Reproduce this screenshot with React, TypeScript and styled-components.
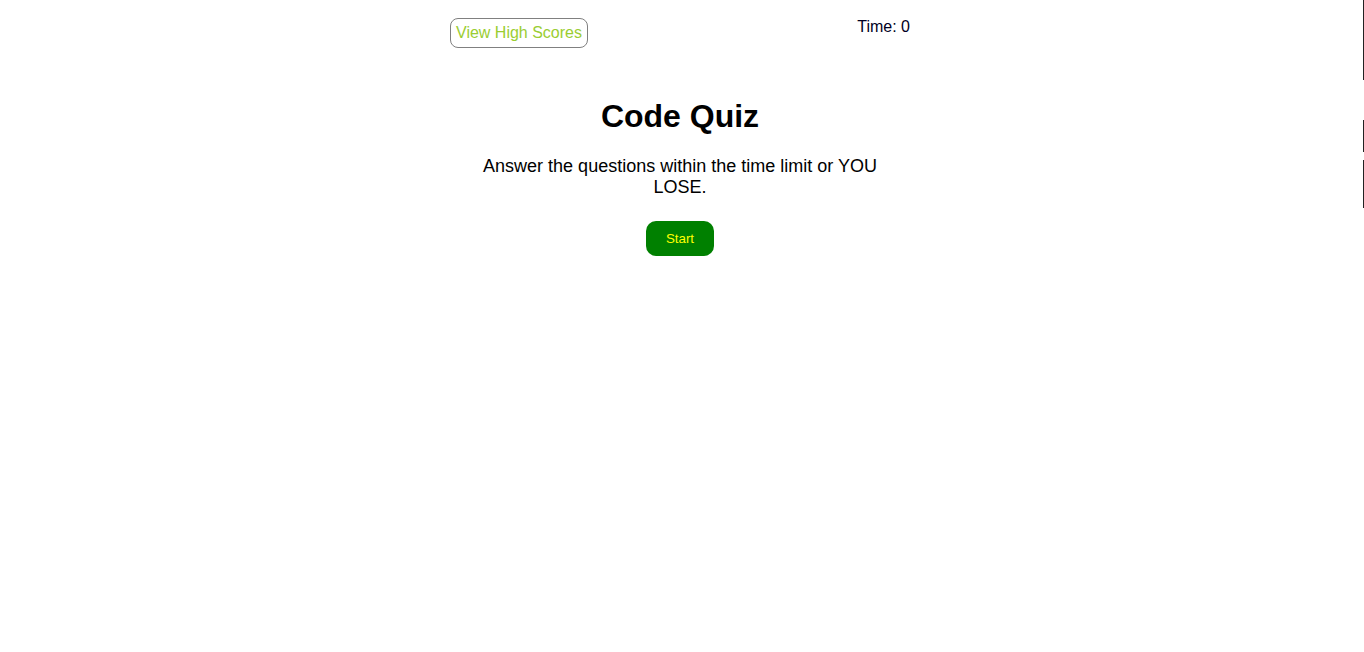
import React from "react";
import styled, { createGlobalStyle } from "styled-components";

const GlobalStyle = createGlobalStyle`
  html, body {
    margin: 0;
    padding: 0;
    background: #ffffff;
    font-family: "Liberation Sans", Arial, sans-serif;
  }
`;

const Page = styled.div`
  width: 1360px;
  min-height: 652px;
  box-sizing: border-box;
`;

const Container = styled.div`
  width: 460px;
  margin: 0 auto;
  display: flex;
  flex-direction: column;
  align-items: center;
`;

const Header = styled.header`
  width: 100%;
  display: flex;
  justify-content: space-between;
  align-items: flex-start;
  padding-top: 15px;
`;

const ScoresButton = styled.button`
  margin-top: 3px;
  font-family: "Liberation Sans", Arial, sans-serif;
  font-size: 16px;
  line-height: 18px;
  color: #9acd32;
  background: #ffffff;
  border: 1px solid #808080;
  border-radius: 8px;
  padding: 5px 5px;
  cursor: pointer;
`;

const Timer = styled.div`
  margin-top: 3px;
  font-size: 16px;
  line-height: 18px;
  color: #000022;
`;

const Title = styled.h1`
  margin: 50px 0 0;
  font-size: 32px;
  line-height: 37px;
  font-weight: 700;
  color: #000000;
`;

const Intro = styled.p`
  width: 400px;
  margin: 21px 0 0;
  font-size: 18px;
  line-height: 21px;
  text-align: center;
  color: #000000;
`;

const StartButton = styled.button`
  margin-top: 23px;
  font-family: "Liberation Sans", Arial, sans-serif;
  font-size: 13.33px;
  line-height: 15px;
  color: #ffff00;
  background: #008000;
  border: none;
  border-radius: 10px;
  padding: 10px 20px;
  cursor: pointer;
`;

const EdgeLine = styled.div`
  position: fixed;
  top: 0;
  right: 0;
  width: 1px;
  height: 100%;
  background: linear-gradient(
    to bottom,
    #222 0px,
    #222 80px,
    transparent 80px,
    transparent 120px,
    #222 120px,
    #222 152px,
    transparent 152px,
    transparent 160px,
    #222 160px,
    #222 208px,
    transparent 208px
  );
`;

export default function App() {
  return (
    <>
      <GlobalStyle />
      <Page>
        <Container>
          <Header>
            <ScoresButton>View High Scores</ScoresButton>
            <Timer>Time: 0</Timer>
          </Header>
          <Title>Code Quiz</Title>
          <Intro>Answer the questions within the time limit or YOU LOSE.</Intro>
          <StartButton>Start</StartButton>
        </Container>
      </Page>
      <EdgeLine />
    </>
  );
}
